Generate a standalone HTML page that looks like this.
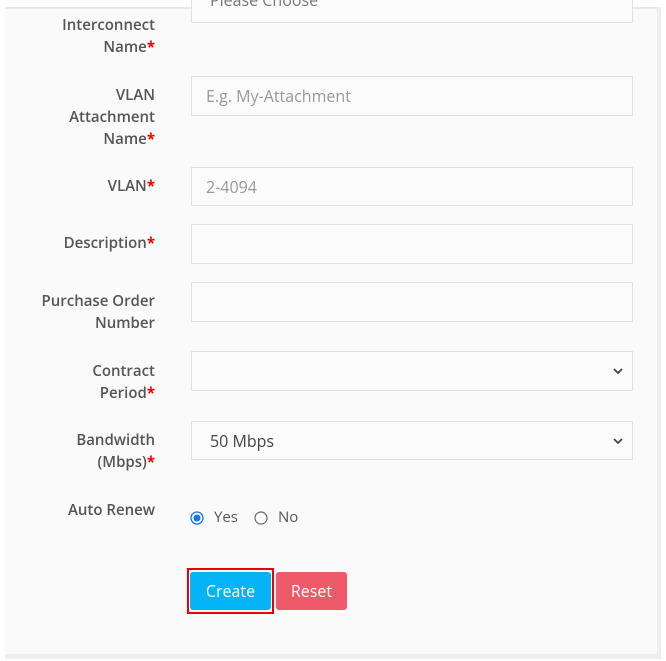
<!DOCTYPE html>
<html><head><style>
*{box-sizing:border-box;margin:0;padding:0}
body{width:666px;height:661px;background:#fff;font-family:"Open Sans","Liberation Sans",sans-serif;position:relative;overflow:hidden}
.panel{position:absolute;left:5px;top:7px;width:652px;height:647px;background:#fafafa;border-top:2px solid #e8e8e8}
.outerR{position:absolute;left:657px;top:7px;width:4px;height:652px;background:#eee}
.outerB{position:absolute;left:5px;top:654px;width:656px;height:5px;background:#eee}
.lbl{position:absolute;right:511px;text-align:right;font-size:15px;font-weight:600;color:#555;line-height:22px;width:150px}
.lbl b{color:#e00;font-weight:700}
.inp{position:absolute;left:191px;width:442px;background:#fbfbfb;border:1px solid #e0e0e0;font-size:16px;color:#999;padding-left:14px;display:flex;align-items:center}
.sel{color:#444;padding-left:18px}
.chev{position:absolute;right:8px;top:50%;margin-top:-5px}
.btn{position:absolute;top:572px;height:38px;color:#fff;font-size:16px;border-radius:3px;display:flex;align-items:center;justify-content:center}
</style></head><body>
<div class="panel"></div><div class="outerR"></div><div class="outerB"></div>
<div class="inp" style="top:-24px;height:47px;color:#777;padding-left:18px">Please Choose</div>
<div class="lbl" style="top:14px">Interconnect<br>Name<b>*</b></div>
<div class="lbl" style="top:84px">VLAN<br>Attachment<br>Name<b>*</b></div>
<div class="inp" style="top:76px;height:40px">E.g. My-Attachment</div>
<div class="lbl" style="top:175px">VLAN<b>*</b></div>
<div class="inp" style="top:167px;height:39px">2-4094</div>
<div class="lbl" style="top:232px">Description<b>*</b></div>
<div class="inp" style="top:224px;height:40px"></div>
<div class="lbl" style="top:290px">Purchase Order<br>Number</div>
<div class="inp" style="top:282px;height:40px"></div>
<div class="lbl" style="top:360px">Contract<br>Period<b>*</b></div>
<div class="inp" style="top:351px;height:40px"><svg class="chev" width="12" height="10" viewBox="0 0 12 10"><path d="M2 3l4 4 4-4" fill="none" stroke="#444" stroke-width="1.8"/></svg></div>
<div class="lbl" style="top:429px">Bandwidth<br>(Mbps)<b>*</b></div>
<div class="inp sel" style="top:421px;height:39px">50 Mbps<svg class="chev" width="12" height="10" viewBox="0 0 12 10"><path d="M2 3l4 4 4-4" fill="none" stroke="#444" stroke-width="1.8"/></svg></div>
<div class="lbl" style="top:499px">Auto Renew</div>
<svg style="position:absolute;left:190px;top:511px" width="14" height="14"><circle cx="7" cy="7" r="6" fill="#fff" stroke="#1a73e8" stroke-width="1.3"/><circle cx="7" cy="7" r="3.5" fill="#1a73e8"/></svg>
<div style="position:absolute;left:214px;top:507px;font-size:15px;color:#555">Yes</div>
<svg style="position:absolute;left:254px;top:511px" width="14" height="14"><circle cx="7" cy="7" r="6" fill="#fff" stroke="#666" stroke-width="1.2"/></svg>
<div style="position:absolute;left:278px;top:507px;font-size:15px;color:#555">No</div>
<div style="position:absolute;left:187px;top:568px;width:87px;height:46px;border:2px solid #e00"></div>
<div class="btn" style="left:190px;width:81px;background:#05b4f6">Create</div>
<div class="btn" style="left:276px;width:71px;background:#ef5a6a">Reset</div>
</body></html>
